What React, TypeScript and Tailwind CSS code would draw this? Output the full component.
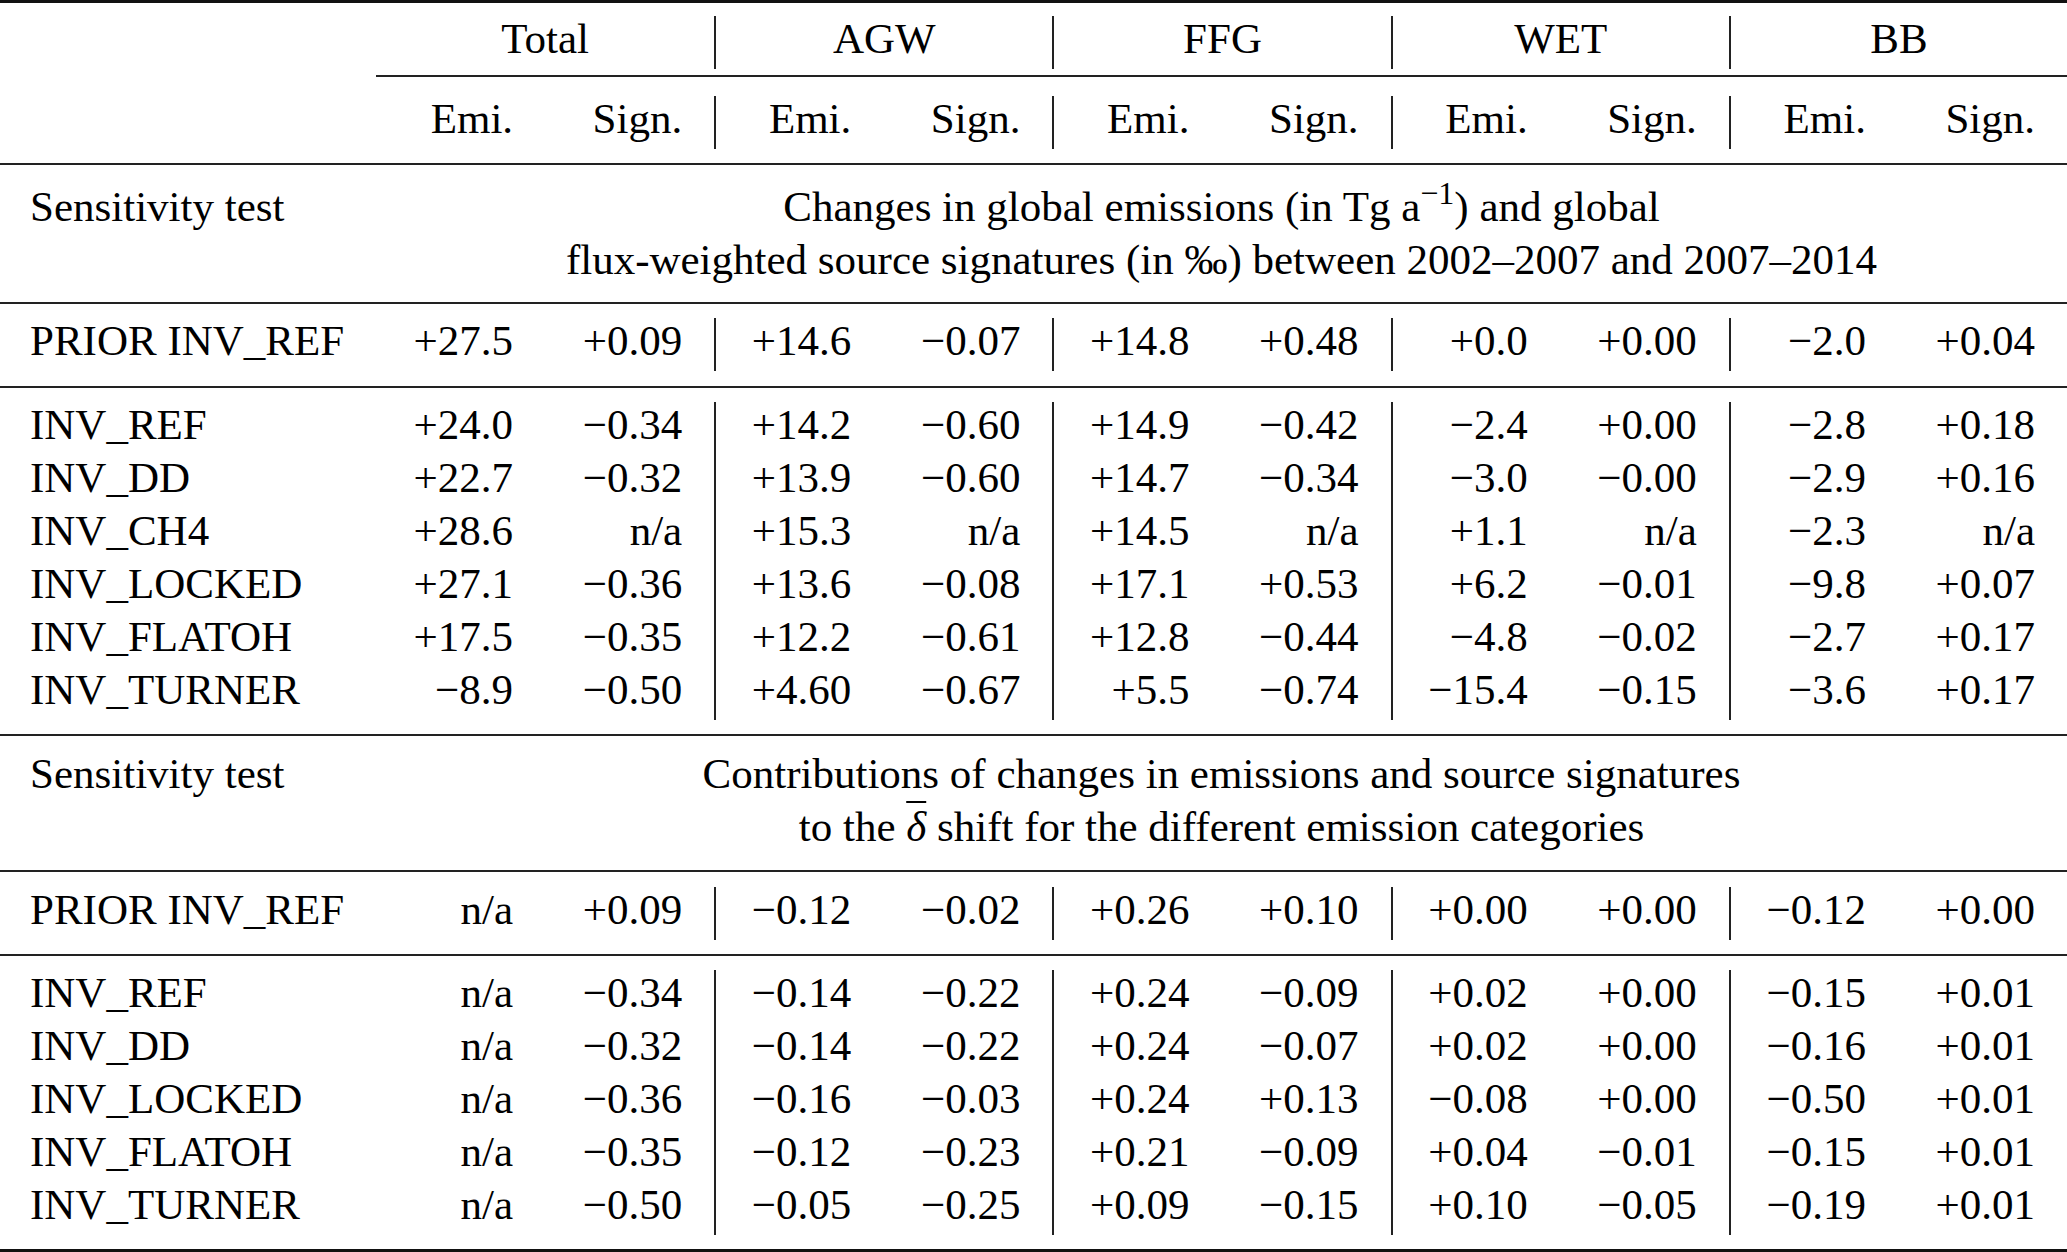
// Sensitivity-test table: emission changes and source signatures per category.

const GRID = "grid grid-cols-[376px_repeat(10,minmax(0,1fr))]";

const groups = ["Total", "AGW", "FFG", "WET", "BB"];

const changes: [string, string[]][] = [
  ["INV_REF", ["+24.0", "−0.34", "+14.2", "−0.60", "+14.9", "−0.42", "−2.4", "+0.00", "−2.8", "+0.18"]],
  ["INV_DD", ["+22.7", "−0.32", "+13.9", "−0.60", "+14.7", "−0.34", "−3.0", "−0.00", "−2.9", "+0.16"]],
  ["INV_CH4", ["+28.6", "n/a", "+15.3", "n/a", "+14.5", "n/a", "+1.1", "n/a", "−2.3", "n/a"]],
  ["INV_LOCKED", ["+27.1", "−0.36", "+13.6", "−0.08", "+17.1", "+0.53", "+6.2", "−0.01", "−9.8", "+0.07"]],
  ["INV_FLATOH", ["+17.5", "−0.35", "+12.2", "−0.61", "+12.8", "−0.44", "−4.8", "−0.02", "−2.7", "+0.17"]],
  ["INV_TURNER", ["−8.9", "−0.50", "+4.60", "−0.67", "+5.5", "−0.74", "−15.4", "−0.15", "−3.6", "+0.17"]],
];

const contributions: [string, string[]][] = [
  ["INV_REF", ["n/a", "−0.34", "−0.14", "−0.22", "+0.24", "−0.09", "+0.02", "+0.00", "−0.15", "+0.01"]],
  ["INV_DD", ["n/a", "−0.32", "−0.14", "−0.22", "+0.24", "−0.07", "+0.02", "+0.00", "−0.16", "+0.01"]],
  ["INV_LOCKED", ["n/a", "−0.36", "−0.16", "−0.03", "+0.24", "+0.13", "−0.08", "+0.00", "−0.50", "+0.01"]],
  ["INV_FLATOH", ["n/a", "−0.35", "−0.12", "−0.23", "+0.21", "−0.09", "+0.04", "−0.01", "−0.15", "+0.01"]],
  ["INV_TURNER", ["n/a", "−0.50", "−0.05", "−0.25", "+0.09", "−0.15", "+0.10", "−0.05", "−0.19", "+0.01"]],
];

function Rule({ thick = false }: { thick?: boolean }) {
  return <div className={thick ? "h-[3px] bg-[#111]" : "h-[2px] bg-[#222]"} />;
}

function Row({ label, values }: { label: string; values: string[] }) {
  return (
    <div className={`${GRID} h-[53px] leading-[45px]`}>
      <div className="pl-[30px] whitespace-nowrap">{label}</div>
      {values.map((v, i) => (
        <div
          key={i}
          className={
            i > 0 && i % 2 === 0
              ? "border-l-2 border-[#222] pr-[32px] text-right whitespace-nowrap"
              : "pr-[32px] text-right whitespace-nowrap"
          }
        >
          {v}
        </div>
      ))}
    </div>
  );
}

function SectionHeader({ lines, className }: { lines: React.ReactNode[]; className: string }) {
  return (
    <div className={`${GRID} items-start leading-[45px] ${className}`}>
      <div className="h-[53px] pl-[30px] whitespace-nowrap">Sensitivity test</div>
      <div className="col-span-10 text-center">
        {lines.map((line, i) => (
          <div key={i} className="h-[53px] whitespace-nowrap">
            {line}
          </div>
        ))}
      </div>
    </div>
  );
}

export default function App() {
  return (
    <div className="w-[2067px] h-[1252px] bg-white text-black text-[43px] font-['Liberation_Serif','Times_New_Roman',serif]">
      <Rule thick />

      {/* Category header */}
      <div className={`${GRID} h-[53px] leading-[45px] box-content pt-[13px] pb-[6px]`}>
        <div />
        {groups.map((g, i) => (
          <div
            key={g}
            className={i > 0 ? "col-span-2 border-l-2 border-[#222] text-center" : "col-span-2 text-center"}
          >
            {g}
          </div>
        ))}
      </div>
      <div className="ml-[376px] h-[2px] bg-[#222]" />

      {/* Emi. / Sign. */}
      <div className="pt-[19px] pb-[14px]">
        <Row label="" values={["Emi.", "Sign.", "Emi.", "Sign.", "Emi.", "Sign.", "Emi.", "Sign.", "Emi.", "Sign."]} />
      </div>
      <Rule />

      <SectionHeader
        className="pt-[19px] pb-[12px]"
        lines={[
          <>
            Changes in global emissions (in Tg a
            <sup className="relative -top-[17px] text-[32px] leading-[0]">−1</sup>) and global
          </>,
          <>flux-weighted source signatures (in ‰) between 2002–2007 and 2007–2014</>,
        ]}
      />
      <Rule />

      <div className="pt-[14px] pb-[15px]">
        <Row
          label="PRIOR INV_REF"
          values={["+27.5", "+0.09", "+14.6", "−0.07", "+14.8", "+0.48", "+0.0", "+0.00", "−2.0", "+0.04"]}
        />
      </div>
      <Rule />

      <div className="pt-[14px] pb-[14px]">
        {changes.map(([label, values]) => (
          <Row key={label} label={label} values={values} />
        ))}
      </div>
      <Rule />

      <SectionHeader
        className="pt-[15px] pb-[13px]"
        lines={[
          <>Contributions of changes in emissions and source signatures</>,
          <>
            to the <span className="italic overline decoration-[2px]">δ</span> shift for the different emission
            categories
          </>,
        ]}
      />
      <Rule />

      <div className="pt-[15px] pb-[14px]">
        <Row
          label="PRIOR INV_REF"
          values={["n/a", "+0.09", "−0.12", "−0.02", "+0.26", "+0.10", "+0.00", "+0.00", "−0.12", "+0.00"]}
        />
      </div>
      <Rule />

      <div className="pt-[14px] pb-[14px]">
        {contributions.map(([label, values]) => (
          <Row key={label} label={label} values={values} />
        ))}
      </div>
      <Rule thick />
    </div>
  );
}
